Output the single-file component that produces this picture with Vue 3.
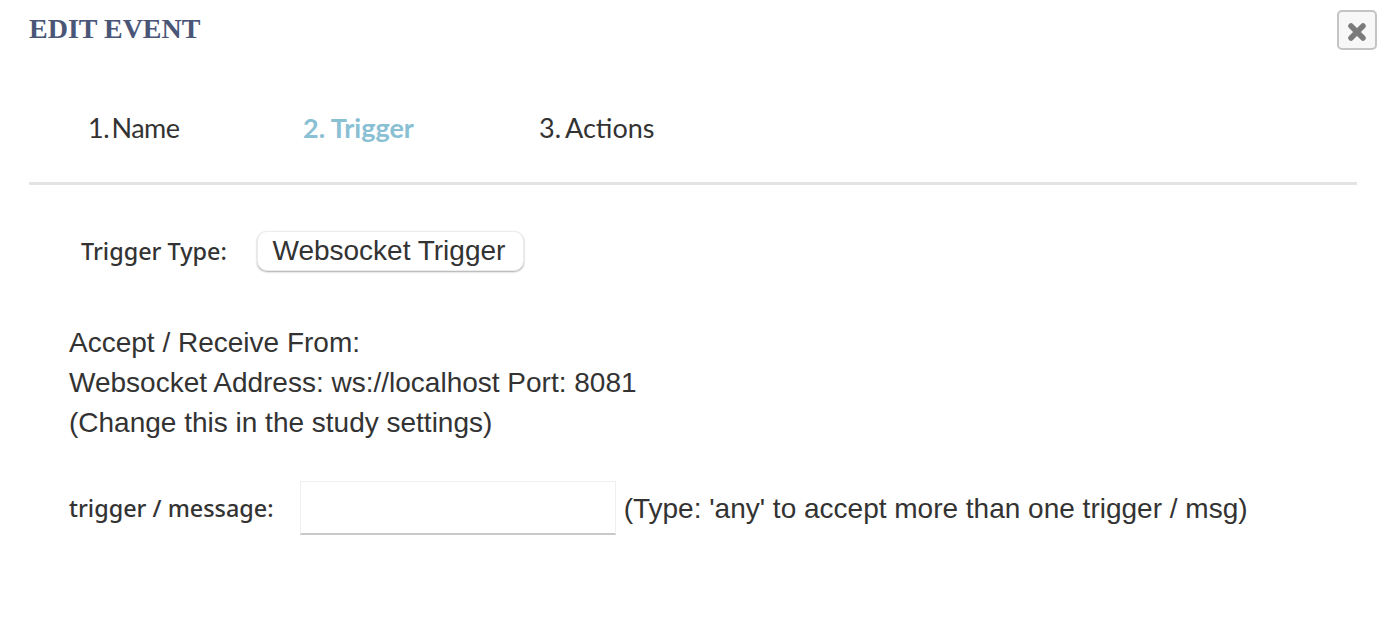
<template>
  <div class="modal">
    <header class="modal-head">
      <h1 class="title">EDIT EVENT</h1>
      <button class="close" type="button" aria-label="Close">
        <svg class="close-icon" width="20" height="20" viewBox="0 0 20 20">
          <path d="M4 4 L16 16 M16 4 L4 16" stroke="#7a7a7a" stroke-width="5.5" stroke-linecap="round" fill="none" />
        </svg>
      </button>
    </header>

    <nav class="tabs">
      <a v-for="tab in tabs" :key="tab.label" class="tab" :class="{ active: tab.active }">{{ tab.label }}</a>
    </nav>

    <section class="body">
      <div class="type-row">
        <label class="label">Trigger Type:</label>
        <div class="select">Websocket Trigger</div>
      </div>

      <div class="info">
        <div>Accept / Receive From:</div>
        <div>Websocket Address: ws://localhost Port: 8081</div>
        <div>(Change this in the study settings)</div>
      </div>

      <div class="msg-row">
        <label class="label">trigger / message:</label>
        <input class="msg-input" type="text" />
        <span class="hint">(Type: 'any' to accept more than one trigger / msg)</span>
      </div>
    </section>
  </div>
</template>

<script setup>
const tabs = [
  { label: '1. Name' },
  { label: '2. Trigger', active: true },
  { label: '3. Actions' },
]
</script>

<style>
html,
body {
  margin: 0;
  background: #fff;
}
</style>

<style scoped>
.modal {
  width: 1386px;
  height: 618px;
  overflow: hidden;
  box-sizing: border-box;
  padding: 0 29px;
  background: #fff;
  color: #333;
  font-family: "Liberation Sans", Arial, sans-serif;
}

.modal-head {
  display: flex;
  justify-content: space-between;
  align-items: flex-start;
  height: 80px;
}

.title {
  margin: 14px 0 0;
  font-family: "Liberation Serif", "Times New Roman", serif;
  font-size: 28px;
  line-height: 30px;
  font-weight: 700;
  color: #4a5678;
}

.close {
  display: flex;
  align-items: center;
  justify-content: center;
  box-sizing: border-box;
  width: 40px;
  height: 40px;
  margin: 10px -20px 0 0;
  padding: 0;
  background: #f7f7f7;
  border: 2px solid #c4c4c4;
  border-radius: 5px;
}

.close-icon {
  margin-top: 3px;
}

.tabs {
  display: flex;
  height: 105px;
  padding-left: 59px;
  box-sizing: border-box;
  border-bottom: 3px solid #e3e3e3;
}

.tab {
  margin-top: 31px;
  font-family: Lato, "Noto Sans", sans-serif;
  font-size: 27px;
  line-height: 34px;
  color: #333;
}

.tab:nth-child(1) {
  width: 215px;
  letter-spacing: -0.5px;
  word-spacing: -4px;
}

.tab:nth-child(2) {
  width: 236px;
}

.tab:nth-child(3) {
  word-spacing: -2px;
}

.tab.active {
  color: #89c0d3;
  font-weight: 700;
}

.body {
  padding-top: 45px;
}

.type-row {
  display: flex;
  align-items: center;
  padding-left: 52px;
  height: 42px;
}

.label {
  flex: none;
  font-family: "Noto Sans", "Open Sans", sans-serif;
  font-size: 23.4px;
  font-weight: 500;
  color: #333;
}

.select {
  box-sizing: border-box;
  width: 267px;
  height: 40px;
  margin-left: 30px;
  padding-right: 3px;
  border: 1px solid #ececec;
  border-radius: 10px;
  box-shadow: 0 1px 2px rgba(0, 0, 0, 0.35);
  font-size: 28px;
  line-height: 37px;
  text-align: center;
  background: #fff;
}

.info {
  margin-top: 51px;
  padding-left: 40px;
  font-size: 28px;
  line-height: 40px;
}

.msg-row {
  display: flex;
  align-items: center;
  margin-top: 38px;
  padding-left: 40px;
}

.msg-input {
  flex: none;
  box-sizing: border-box;
  width: 316px;
  height: 54px;
  margin-left: 26px;
  padding: 0 8px;
  background: #fff;
  border: 1px solid #efefef;
  border-bottom: 2px solid #c9c9c9;
  outline: none;
}

.hint {
  margin: 2px 0 0 8px;
  font-size: 28px;
  white-space: nowrap;
}
</style>
